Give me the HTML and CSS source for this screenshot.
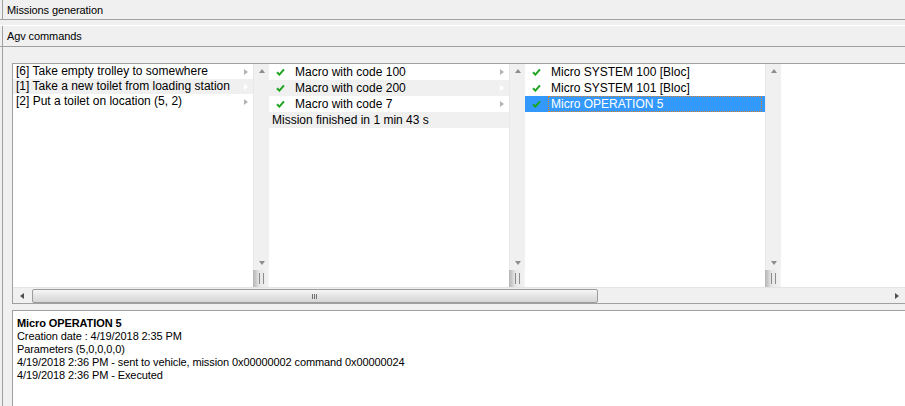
FILE: index.html
```html
<!DOCTYPE html>
<html>
<head>
<meta charset="utf-8">
<title>Agv commands</title>
<link rel="stylesheet" href="styles.css">
</head>
<body>
<div class="window">
  <div class="hdr hdr-first">Missions generation</div>
  <div class="hdr-gap"></div>
  <div class="hdr hdr-second">Agv commands</div>
  <div class="content">
    <div class="lists">
      <div class="columns">
        <div class="col">
          <div class="list list-plain">
            <div class="row"><span class="txt">[6] Take empty trolley to somewhere</span><span class="arr"></span></div>
            <div class="row hl"><span class="txt">[1] Take a new toilet from loading station</span><span class="arr"></span></div>
            <div class="row"><span class="txt">[2] Put a toilet on location (5, 2)</span><span class="arr"></span></div>
          </div>
          <div class="vscroll">
            <div class="vtrack"><span class="up"></span><span class="down"></span></div>
            <div class="vgrip"><span></span><span></span></div>
          </div>
        </div>
        <div class="col">
          <div class="list">
            <div class="row chk"><svg class="ck" width="9" height="8" viewBox="0 0 9 8"><path d="M1 4.2 L3.4 6.6 L8 1.4" fill="none" stroke="#1ea51e" stroke-width="2"/></svg><span class="lbl">Macro with code 100</span><span class="arr"></span></div>
            <div class="row chk hl"><svg class="ck" width="9" height="8" viewBox="0 0 9 8"><path d="M1 4.2 L3.4 6.6 L8 1.4" fill="none" stroke="#1ea51e" stroke-width="2"/></svg><span class="lbl">Macro with code 200</span><span class="arr"></span></div>
            <div class="row chk"><svg class="ck" width="9" height="8" viewBox="0 0 9 8"><path d="M1 4.2 L3.4 6.6 L8 1.4" fill="none" stroke="#1ea51e" stroke-width="2"/></svg><span class="lbl">Macro with code 7</span><span class="arr"></span></div>
            <div class="row hl"><span class="txt">Mission finished in 1 min 43 s</span></div>
          </div>
          <div class="vscroll">
            <div class="vtrack"><span class="up"></span><span class="down"></span></div>
            <div class="vgrip"><span></span><span></span></div>
          </div>
        </div>
        <div class="col">
          <div class="list">
            <div class="row chk"><svg class="ck" width="9" height="8" viewBox="0 0 9 8"><path d="M1 4.2 L3.4 6.6 L8 1.4" fill="none" stroke="#1ea51e" stroke-width="2"/></svg><span class="lbl">Micro SYSTEM 100 [Bloc]</span></div>
            <div class="row chk"><svg class="ck" width="9" height="8" viewBox="0 0 9 8"><path d="M1 4.2 L3.4 6.6 L8 1.4" fill="none" stroke="#1ea51e" stroke-width="2"/></svg><span class="lbl">Micro SYSTEM 101 [Bloc]</span></div>
            <div class="row chk sel"><svg class="ck" width="9" height="8" viewBox="0 0 9 8"><path d="M1 4.2 L3.4 6.6 L8 1.4" fill="none" stroke="#1ea51e" stroke-width="2"/></svg><span class="lbl focus">Micro OPERATION 5</span></div>
          </div>
          <div class="vscroll">
            <div class="vtrack"><span class="up"></span><span class="down"></span></div>
            <div class="vgrip"><span></span><span></span></div>
          </div>
        </div>
        <div class="rest"></div>
      </div>
      <div class="hscroll">
        <div class="hbtn hbtn-left"><span class="left"></span></div>
        <div class="htrack"><div class="thumb"><span></span><span></span><span></span></div></div>
        <div class="hbtn hbtn-right"><span class="right"></span></div>
      </div>
    </div>
    <div class="details">
      <div class="d-title">Micro OPERATION 5</div>
      <div>Creation date : 4/19/2018 2:35 PM</div>
      <div>Parameters (5,0,0,0,0)</div>
      <div>4/19/2018 2:36 PM - sent to vehicle, mission 0x00000002 command 0x00000024</div>
      <div>4/19/2018 2:36 PM - Executed</div>
    </div>
  </div>
</div>
</body>
</html>
```
FILE: styles.css
```css
* { box-sizing: border-box; }
html, body { margin: 0; padding: 0; }
body {
  width: 905px;
  height: 406px;
  overflow: hidden;
  background: #f0f0f0;
  font-family: "Liberation Sans", Arial, sans-serif;
  font-size: 11px;
  color: #000;
}
.window {
  display: flex;
  flex-direction: column;
  height: 406px;
}
.hdr {
  background: linear-gradient(#a0a0a0, #a0a0a0) 2px 0 / 1px 100% no-repeat, #f0f0f0;
  border-bottom: 1px solid #a0a0a0;
  padding-left: 7px;
  line-height: 21px;
  white-space: nowrap;
  letter-spacing: -0.1px;
}
.hdr-first { height: 20px; }
.hdr-gap { height: 5px; }
.hdr-second {
  height: 22px;
  border-top: 1px solid #ffffff;
}
.content {
  flex: 1;
  display: flex;
  flex-direction: column;
  padding: 16px 0 0 12px;
  background: linear-gradient(#a0a0a0, #a0a0a0) 2px 0 / 1px 100% no-repeat, #f0f0f0;
  min-height: 0;
}
.lists {
  height: 241px;
  border: 1px solid #a0a0a0;
  border-right: none;
  display: flex;
  flex-direction: column;
  background: #fff;
}
.columns {
  height: 223px;
  display: flex;
}
.col {
  width: 256px;
  display: flex;
  flex-shrink: 0;
}
.rest { flex: 1; }
.list {
  width: 240px;
  flex-shrink: 0;
  font-size: 12px;
}
.row {
  height: 16px;
  line-height: 15px;
  display: flex;
  align-items: center;
  padding-left: 3px;
  white-space: nowrap;
}
.list-plain .row { height: 15px; line-height: 15px; }
.row .txt { flex: 1; overflow: hidden; }
.row.hl { background: #f0f0f0; }
.row.chk { padding-left: 7px; }
.ck { flex-shrink: 0; margin-right: 7px; }
.lbl {
  flex: 1;
  height: 16px;
  line-height: 14px;
  border: 1px dotted transparent;
  padding-left: 2px;
  margin-right: 3px;
}
.row.sel { background: #3399ff; color: #fff; }
.lbl.focus { border-color: #d9822b; }
.arr {
  width: 0;
  height: 0;
  border-top: 3.5px solid transparent;
  border-bottom: 3.5px solid transparent;
  border-left: 4px solid #b4b4b4;
  margin-right: 5px;
  flex-shrink: 0;
}
.row.hl .arr { border-left-color: #ffffff; }
.row.chk .lbl + .arr { margin-left: -3px; }

.vscroll {
  width: 16px;
  flex-shrink: 0;
  display: flex;
  flex-direction: column;
  background: #fff;
}
.vtrack {
  height: 206px;
  background: #f0f0f0;
  border-left: 1px solid #e8e8e8;
  display: flex;
  flex-direction: column;
  justify-content: space-between;
  align-items: center;
  padding: 5px 0 5px;
}
.up {
  width: 0; height: 0;
  border-left: 3.5px solid transparent;
  border-right: 3.5px solid transparent;
  border-bottom: 4px solid #8c8c8c;
}
.down {
  width: 0; height: 0;
  border-left: 3.5px solid transparent;
  border-right: 3.5px solid transparent;
  border-top: 4px solid #8c8c8c;
}
.vgrip {
  height: 17px;
  background: linear-gradient(to right, #b4b4b4, #e6e6e6 6px, #f4f4f4);
  display: flex;
  justify-content: center;
  align-items: center;
  gap: 3px;
}
.vgrip span {
  width: 1px;
  height: 11px;
  background: #8c8c8c;
}

.hscroll {
  height: 16px;
  display: flex;
  background: #f0f0f0;
  border-top: 1px solid #e4e4e4;
}
.hbtn {
  width: 17px;
  display: flex;
  align-items: center;
  justify-content: center;
  flex-shrink: 0;
}
.hbtn-right { width: 16px; }
.left {
  width: 0; height: 0;
  border-top: 3px solid transparent;
  border-bottom: 3px solid transparent;
  border-right: 4px solid #505050;
}
.right {
  width: 0; height: 0;
  border-top: 3px solid transparent;
  border-bottom: 3px solid transparent;
  border-left: 4px solid #505050;
}
.htrack {
  flex: 1;
  padding: 1px 0 1px 2px;
}
.thumb {
  width: 566px;
  height: 14px;
  border: 1px solid #9c9c9c;
  border-radius: 2px;
  background: linear-gradient(#f6f6f6, #e4e4e4 50%, #d6d6d6);
  display: flex;
  justify-content: center;
  align-items: center;
  gap: 1px;
  padding-right: 2px;
}
.thumb span {
  width: 1px;
  height: 5px;
  background: #707070;
}

.details {
  flex: 1;
  margin-top: 6px;
  background: #fff;
  border-top: 1px solid #a0a0a0;
  border-left: 1px solid #a0a0a0;
  padding: 6px 0 0 4px;
  line-height: 13px;
  white-space: nowrap;
  letter-spacing: -0.1px;
}
.d-title { font-weight: bold; }
```
